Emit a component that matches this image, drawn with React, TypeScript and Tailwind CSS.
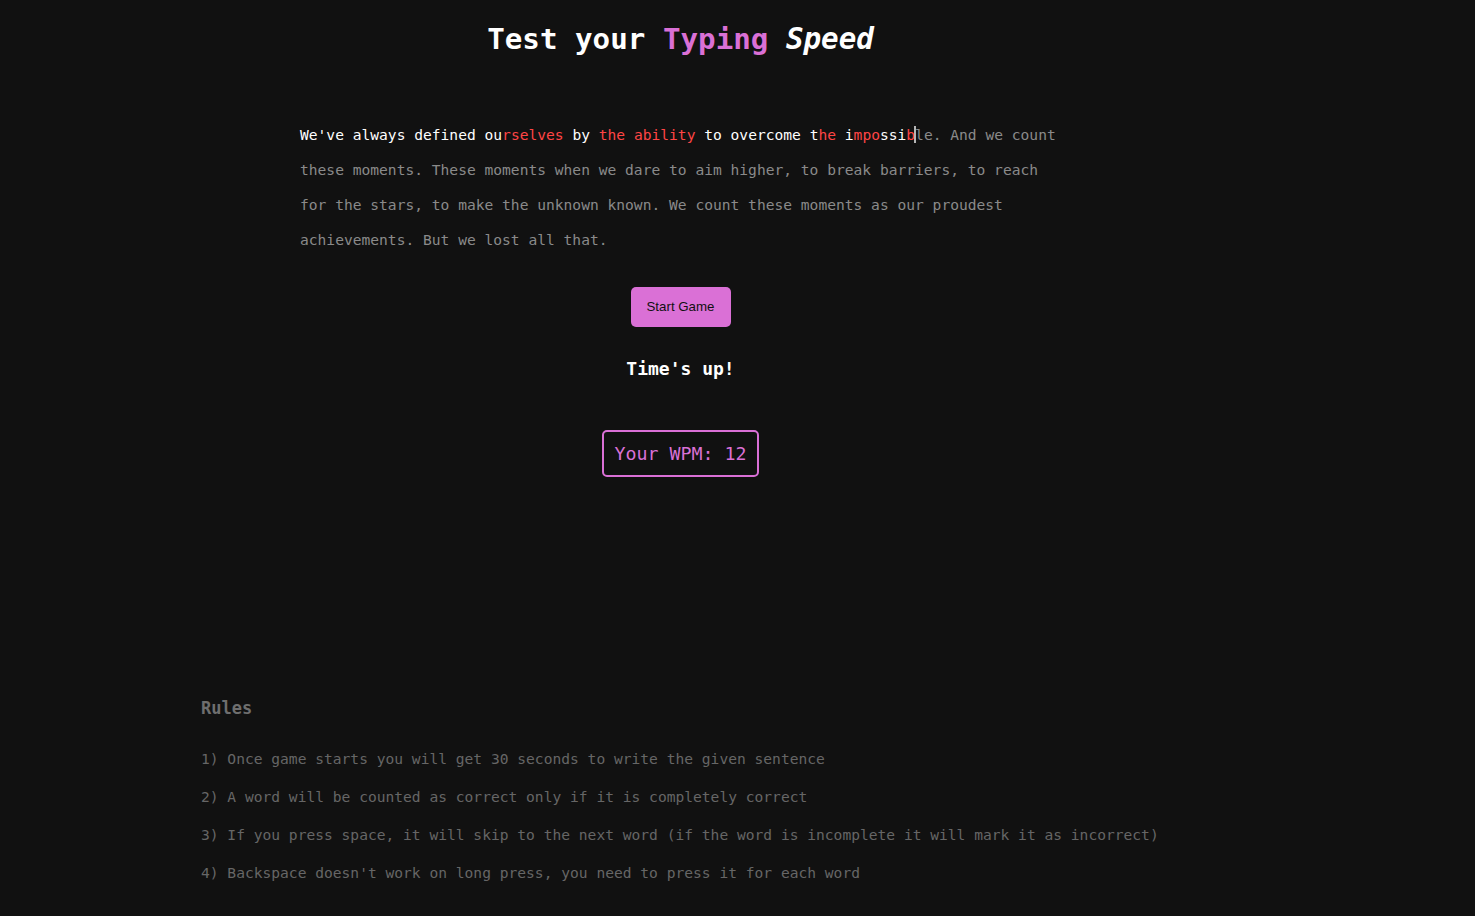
import React from "react";

type Seg = { t: string; c: "ok" | "bad" | "todo" };

const typed: Seg[] = [
  { t: "We've always defined ou", c: "ok" },
  { t: "rselves", c: "bad" },
  { t: " by ", c: "ok" },
  { t: "the ability", c: "bad" },
  { t: " to overcome t", c: "ok" },
  { t: "he", c: "bad" },
  { t: " i", c: "ok" },
  { t: "mpo", c: "bad" },
  { t: "ssi", c: "ok" },
  { t: "b", c: "bad" },
];

const rest =
  "e. And we count these moments. These moments when we dare to aim higher, to break barriers, to reach for the stars, to make the unknown known. We count these moments as our proudest achievements. But we lost all that.";

const rules = [
  "1) Once game starts you will get 30 seconds to write the given sentence",
  "2) A word will be counted as correct only if it is completely correct",
  "3) If you press space, it will skip to the next word (if the word is incomplete it will mark it as incorrect)",
  "4) Backspace doesn't work on long press, you need to press it for each word",
];

const colorOf = {
  ok: "text-white",
  bad: "text-[#ff4545]",
  todo: "text-[#8a8a8a]",
};

export default function App() {
  return (
    <div className="min-h-[916px] w-full bg-[#111111] font-['DejaVu_Sans_Mono','Liberation_Mono',monospace]">
      <div className="ml-[201px] flex w-[959px] flex-col">
        <h1 className="pt-[20px] text-center text-[29.2px] font-bold leading-[38px] text-white">
          Test your <span className="text-[#da70d6]">Typing</span>{" "}
          <em>Speed</em>
        </h1>

        <p className="ml-[99px] mt-[59px] w-[765px] text-[14.6px] leading-[35px] text-[#8a8a8a]">
          {typed.map((s, i) => (
            <span key={i} className={colorOf[s.c]}>
              {s.t}
            </span>
          ))}
          <span className="relative">
            <span className="absolute -left-px top-0 h-[17px] w-[2px] bg-[#b5b5b5]" />
            l
          </span>
          {rest}
        </p>

        <button className="mx-auto mt-[30px] h-[40px] w-[100px] rounded-[5px] bg-[#da70d6] font-['Liberation_Sans',Arial,sans-serif] text-[13.3px] text-[#111]">
          Start Game
        </button>

        <h3 className="mt-[28px] text-center text-[18px] font-bold leading-[28px] text-white">
          Time's up!
        </h3>

        <div className="mx-auto mt-[47px] rounded-[5px] border-2 border-[#da70d6] px-[10px] py-[10px] text-[18.3px] leading-[23px] text-[#da70d6]">
          Your WPM: 12
        </div>
      </div>

      <div className="ml-[201px] mt-[219px] pb-[24px]">
        <h3 className="text-[17px] font-bold leading-[24px] text-[#6e6e6e]">
          Rules
        </h3>
        <ul className="mt-[20px] text-[14.6px] leading-[38px] text-[#666666]">
          {rules.map((r) => (
            <li key={r}>{r}</li>
          ))}
        </ul>
      </div>
    </div>
  );
}
